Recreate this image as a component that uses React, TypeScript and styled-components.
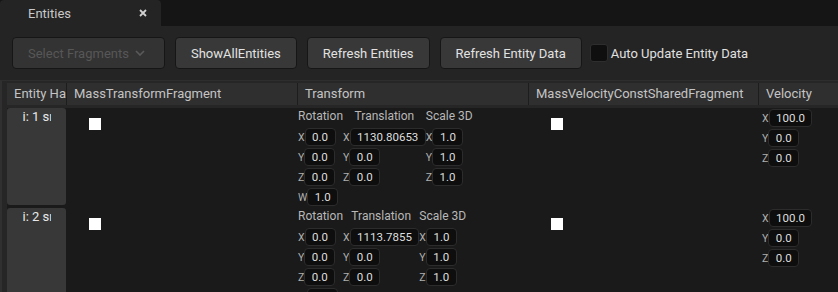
import styled, { createGlobalStyle } from "styled-components";

const GlobalStyle = createGlobalStyle`
  html, body {
    margin: 0;
    background: #1a1a1a;
    overflow: hidden;
  }
  body {
    font-family: Roboto, "Noto Sans", sans-serif;
  }
`;

const columns = "59px 230px 230px 229px 1fr";

const Page = styled.div`
  width: 838px;
  height: 292px;
  overflow: hidden;
  display: flex;
  flex-direction: column;
`;

const TabBar = styled.div`
  height: 26px;
  background: #151515;
  display: flex;
  flex-shrink: 0;
`;

const Tab = styled.div`
  width: 161px;
  background: #242424;
  border-radius: 4px 4px 0 0;
  display: flex;
  align-items: center;
  justify-content: space-between;
  padding: 0 14px 0 28px;
  box-sizing: border-box;
  color: #c8c8c8;
  font-size: 13px;
`;

const Toolbar = styled.div`
  height: 54px;
  background: #242424;
  display: flex;
  align-items: center;
  gap: 10px;
  padding: 0 12px;
  flex-shrink: 0;
`;

const Button = styled.div<{ $disabled?: boolean }>`
  height: 32px;
  box-sizing: border-box;
  border: 1px solid #161616;
  border-radius: 4px;
  background: ${(p) => (p.$disabled ? "#333333" : "#383838")};
  color: ${(p) => (p.$disabled ? "#575757" : "#e2e2e2")};
  font-size: 13px;
  padding: ${(p) => (p.$disabled ? "0 19px 0 15px" : "0 15px")};
  display: flex;
  align-items: center;
  gap: 6px;
  white-space: nowrap;
`;

const CheckLabel = styled.label`
  display: flex;
  align-items: center;
  gap: 3px;
  margin-left: -2px;
  color: #e0e0e0;
  font-size: 13px;
`;

const CheckBox = styled.span`
  width: 18px;
  height: 18px;
  box-sizing: border-box;
  border: 1px solid #2e2e2e;
  border-radius: 3px;
  background: #0f0f0f;
`;

const TablePanel = styled.div`
  flex: 1;
  background: #262626;
  border-top: 1px solid #2e2e2e;
  border-left: 2px solid #303030;
  padding: 2px 0 0 5px;
  display: flex;
  flex-direction: column;
  gap: 3px;
  min-height: 0;
`;

const HeaderRow = styled.div`
  display: grid;
  grid-template-columns: ${columns};
  column-gap: 1px;
  height: 22px;
  background: #1d1d1d;
`;

const HeaderCell = styled.div`
  background: #2f2f2f;
  color: #c4c4c4;
  font-size: 13px;
  line-height: 22px;
  padding-left: 7px;
  white-space: nowrap;
  overflow: hidden;
`;

const Body = styled.div`
  background: #1a1a1a;
  flex: 1;
  display: flex;
  flex-direction: column;
  overflow: hidden;
`;

const Row = styled.div`
  display: grid;
  grid-template-columns: ${columns};
  column-gap: 1px;
  flex-shrink: 0;
`;

const EntityCell = styled.div`
  padding-bottom: 3px;
`;

const EntityButton = styled.div`
  height: 96px;
  background: #383838;
  border-radius: 3px;
  display: flex;
  justify-content: center;
  padding-top: 1px;
`;

const EntityText = styled.span`
  width: 28px;
  overflow: hidden;
  white-space: nowrap;
  color: #e8e8e8;
  font-size: 13px;
  line-height: 16px;
`;

const CheckCell = styled.div`
  padding: 10px 0 0 22px;
`;

const WhiteSquare = styled.div`
  width: 12px;
  height: 12px;
  background: #ffffff;
`;

const TransformCell = styled.div`
  display: flex;
  align-items: flex-start;
`;

const Group = styled.div`
  display: flex;
  flex-direction: column;
  align-items: flex-start;
`;

const GroupLabel = styled.div`
  align-self: center;
  height: 19px;
  line-height: 17px;
  color: #b8b8b8;
  font-size: 12px;
  white-space: nowrap;
`;

const VectorCell = styled.div`
  padding-left: 3px;
  display: flex;
  flex-direction: column;
  align-items: flex-start;
`;

const Field = styled.div`
  display: flex;
  align-items: center;
  height: 20px;
`;

const Axis = styled.span`
  color: #b0b0b0;
  font-size: 10.5px;
`;

const NumBox = styled.span`
  height: 18px;
  box-sizing: border-box;
  padding: 0 6.5px;
  border: 1px solid #2c2c2c;
  border-radius: 4px;
  background: #0e0e0e;
  color: #dedede;
  font-size: 11.5px;
  line-height: 16px;
  white-space: nowrap;
`;

type Vec = [string, string][];

const VectorFields = ({ values }: { values: Vec }) => (
  <>
    {values.map(([axis, v]) => (
      <Field key={axis}>
        <Axis>{axis}</Axis>
        <NumBox>{v}</NumBox>
      </Field>
    ))}
  </>
);

const entities = [
  { id: 1, translation: "1130.80653" },
  { id: 2, translation: "1113.7855" },
];

const Chevron = () => (
  <svg width="10" height="6" viewBox="0 0 10 6">
    <polyline points="1,1 5,5 9,1" fill="none" stroke="#5a5a5a" strokeWidth="1.6" />
  </svg>
);

const CloseIcon = () => (
  <svg width="8" height="8" viewBox="0 0 8 8">
    <path d="M1 1 L7 7 M7 1 L1 7" stroke="#d0d0d0" strokeWidth="1.8" />
  </svg>
);

const App: React.FC = () => {
  return (
    <>
      <GlobalStyle />
      <Page>
        <TabBar>
          <Tab>
            <span>Entities</span>
            <CloseIcon />
          </Tab>
        </TabBar>
        <Toolbar>
          <Button $disabled>
            Select Fragments <Chevron />
          </Button>
          <Button>ShowAllEntities</Button>
          <Button>Refresh Entities</Button>
          <Button>Refresh Entity Data</Button>
          <CheckLabel>
            <CheckBox />
            Auto Update Entity Data
          </CheckLabel>
        </Toolbar>
        <TablePanel>
          <HeaderRow>
            <HeaderCell>Entity Handle</HeaderCell>
            <HeaderCell>MassTransformFragment</HeaderCell>
            <HeaderCell>Transform</HeaderCell>
            <HeaderCell>MassVelocityConstSharedFragment</HeaderCell>
            <HeaderCell>Velocity</HeaderCell>
          </HeaderRow>
          <Body>
            {entities.map((e) => (
              <Row key={e.id}>
                <EntityCell>
                  <EntityButton>
                    <EntityText>i: {e.id} sn: 0</EntityText>
                  </EntityButton>
                </EntityCell>
                <CheckCell>
                  <WhiteSquare />
                </CheckCell>
                <TransformCell>
                  <Group>
                    <GroupLabel>Rotation</GroupLabel>
                    <VectorFields
                      values={[
                        ["X", "0.0"],
                        ["Y", "0.0"],
                        ["Z", "0.0"],
                        ["W", "1.0"],
                      ]}
                    />
                  </Group>
                  <Group>
                    <GroupLabel>Translation</GroupLabel>
                    <VectorFields
                      values={[
                        ["X", e.translation],
                        ["Y", "0.0"],
                        ["Z", "0.0"],
                      ]}
                    />
                  </Group>
                  <Group>
                    <GroupLabel>Scale 3D</GroupLabel>
                    <VectorFields
                      values={[
                        ["X", "1.0"],
                        ["Y", "1.0"],
                        ["Z", "1.0"],
                      ]}
                    />
                  </Group>
                </TransformCell>
                <CheckCell>
                  <WhiteSquare />
                </CheckCell>
                <VectorCell>
                  <VectorFields
                    values={[
                      ["X", "100.0"],
                      ["Y", "0.0"],
                      ["Z", "0.0"],
                    ]}
                  />
                </VectorCell>
              </Row>
            ))}
          </Body>
        </TablePanel>
      </Page>
    </>
  );
};

export default App;
